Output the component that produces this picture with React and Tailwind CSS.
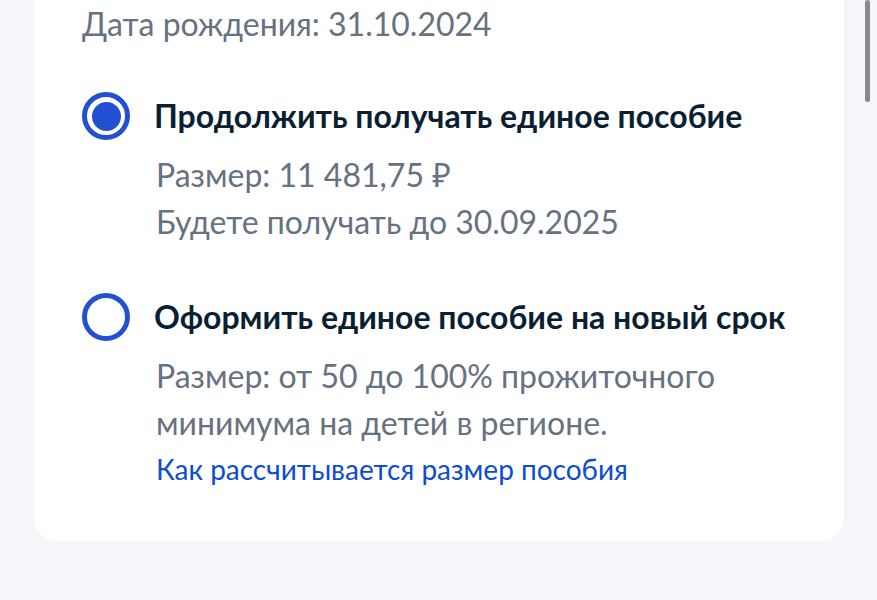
import { useState } from 'react'

const OPTIONS = [
  {
    id: 'continue',
    title: 'Продолжить получать единое пособие',
    lines: ['Размер: 11 481,75 ₽', 'Будете получать до 30.09.2025'],
  },
  {
    id: 'new',
    title: 'Оформить единое пособие на новый срок',
    lines: ['Размер: от 50 до 100% прожиточного', 'минимума на детей в регионе.'],
    link: 'Как рассчитывается размер пособия',
  },
]

export default function App() {
  const [selected, setSelected] = useState('continue')
  return (
    <div
      className="relative min-h-[600px] bg-[#f5f6fa] overflow-hidden"
      style={{ fontFamily: 'Lato, "Noto Sans", sans-serif' }}
    >
      <div className="mx-[34px] w-[810px] rounded-b-[22px] bg-white pl-[48px] pr-6 pt-[4px] pb-[54px]">
        <div className="text-[32px] leading-[40px] text-[#66727f]">
          Дата рождения: 31.10.2024
        </div>

        <div className="mt-[48px] flex flex-col gap-[48px]">
          {OPTIONS.map((opt) => (
            <Option
              key={opt.id}
              option={opt}
              selected={selected === opt.id}
              onSelect={() => setSelected(opt.id)}
            />
          ))}
        </div>
      </div>

      {/* scrollbar thumb */}
      <div className="absolute top-0 right-[7px] w-[5px] h-[102px] rounded-full bg-[#8a8a8e]" />
    </div>
  )
}

function Option({ option, selected, onSelect }) {
  const { title, lines, link } = option
  return (
    <div className="flex flex-col">
      <button type="button" onClick={onSelect} className="flex items-center gap-[24px] text-left">
        <span
          aria-hidden
          className="w-[48px] h-[48px] rounded-full border-[5px] border-[#2350d2] grid place-items-center shrink-0"
        >
          {selected && <span className="w-[29px] h-[29px] rounded-full bg-[#2350d2]" />}
        </span>
        <span className="text-[32px] leading-[40px] font-bold text-[#0b1f33]">{title}</span>
      </button>
      <div className="pl-[74px] mt-[11px]">
        {lines.map((l) => (
          <div key={l} className="text-[32px] leading-[47px] text-[#66727f]">
            {l}
          </div>
        ))}
        {link && (
          <a href="#" className="block mt-[5px] text-[28px] leading-[36px] text-[#0d4cd3]">
            {link}
          </a>
        )}
      </div>
    </div>
  )
}
